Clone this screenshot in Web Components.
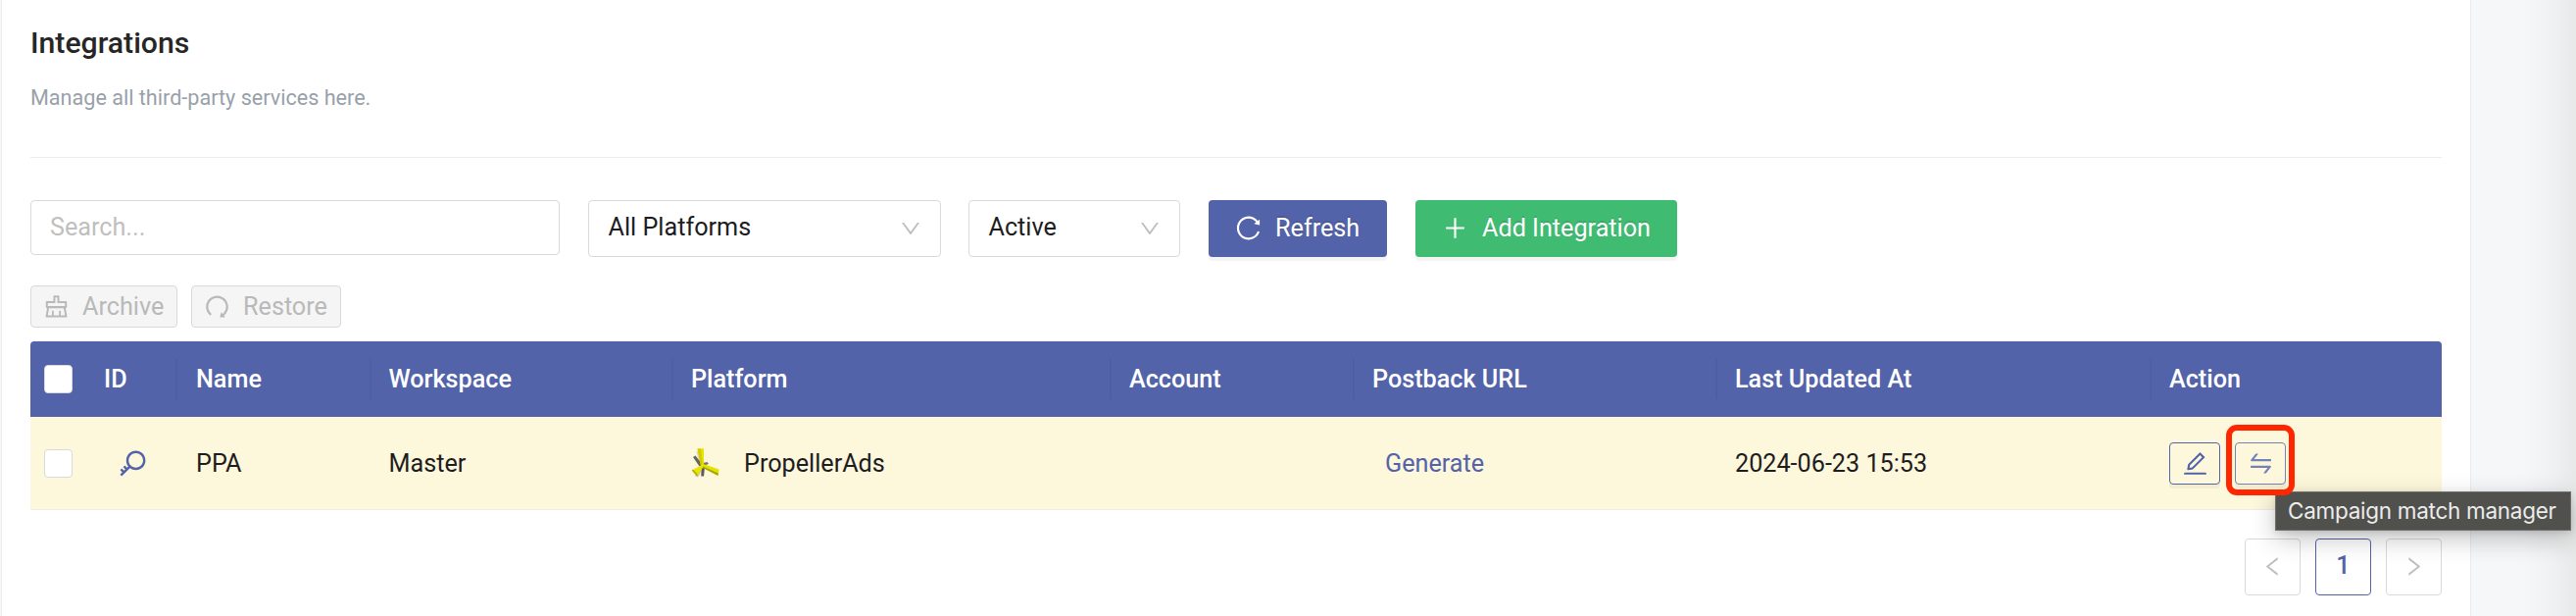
<!DOCTYPE html>
<html lang="en">
<head>
<meta charset="utf-8">
<title>Integrations</title>
<style>
html,body{margin:0;padding:0}
body{background:#f6f7f9;font-family:Roboto,"Liberation Sans",sans-serif;font-size:25.2px;color:#1d1d1f}
</style>
</head>
<body>
<integrations-page></integrations-page>
<script>
const define = (name, html, setup) => {
  const tpl = document.createElement('template');
  tpl.innerHTML = html;
  customElements.define(name, class extends HTMLElement {
    connectedCallback() {
      if (this.shadowRoot) return;
      const root = this.attachShadow({ mode: 'open' });
      root.appendChild(tpl.content.cloneNode(true));
      if (setup) setup(this, root);
    }
  });
};

const ICONS = {
  reload: 'M909.1 209.3l-56.4 44.1C775.8 155.1 656.2 92 521.9 92 290 92 102.3 279.5 102 511.5 101.7 743.7 289.8 932 521.9 932c181.3 0 335.8-115 394.6-276.1 1.5-4.2-.7-8.9-4.9-10.3l-56.7-19.5a8 8 0 00-10.1 4.8c-1.8 5-3.8 10-5.9 14.9-17.3 41-42.1 77.8-73.7 109.4A344.77 344.77 0 01655.9 829c-42.3 17.9-87.4 27-133.8 27-46.5 0-91.5-9.1-133.8-27A341.5 341.5 0 01279 755.2a342.16 342.16 0 01-73.7-109.4c-17.9-42.4-27-87.4-27-133.9s9.1-91.5 27-133.9c17.3-41 42.1-77.8 73.7-109.4 31.6-31.6 68.4-56.4 109.3-73.8 42.3-17.9 87.4-27 133.8-27 46.5 0 91.5 9.1 133.8 27a341.5 341.5 0 01109.3 73.8c9.9 9.9 19.2 20.4 27.8 31.4l-60.2 47a8 8 0 003 14.1l175.6 43c5 1.2 9.9-2.6 9.9-7.7l.8-180.9c-.1-6.6-7.8-10.3-13-6.2z',
  redo: 'M758.2 839.1C851.8 765.9 912 651.9 912 523.9 912 303 733.5 124.3 512.6 124 291.4 123.7 112 302.8 112 523.9c0 125.2 57.5 236.9 147.6 310.2 3.5 2.8 8.6 2.2 11.4-1.3l39.4-50.5c2.7-3.4 2.1-8.3-1.2-11.1-8.1-6.6-15.9-13.7-23.4-21.2a318.64 318.64 0 01-68.6-101.7C200.4 609 192 567.1 192 523.9s8.4-85.1 25.1-124.5c16.1-38.1 39.2-72.3 68.6-101.7 29.4-29.4 63.6-52.5 101.7-68.6C426.9 212.4 468.8 204 512 204s85.1 8.4 124.5 25.1c38.1 16.1 72.3 39.2 101.7 68.6 29.4 29.4 52.5 63.6 68.6 101.7 16.7 39.4 25.1 81.3 25.1 124.5s-8.4 85.1-25.1 124.5a318.64 318.64 0 01-68.6 101.7c-9.3 9.3-19.1 18-29.3 26L668.2 724a8 8 0 00-14.1 3l-39.6 162.2c-1.2 5 2.6 9.9 7.7 9.9l167 .8c6.7 0 10.5-7.7 6.3-12.9l-37.3-47.9z',
  clear: 'M899.1 869.6l-53-305.6H864c14.4 0 26-11.6 26-26V346c0-14.4-11.6-26-26-26H618V138c0-14.4-11.6-26-26-26H432c-14.4 0-26 11.6-26 26v182H160c-14.4 0-26 11.6-26 26v192c0 14.4 11.6 26 26 26h17.9l-53 305.6a25.95 25.95 0 0025.6 30.4h723c1.5 0 3-.1 4.4-.4a25.88 25.88 0 0021.2-30zM204 390h272V182h72v208h272v104H204V390zm468 440V674c0-4.4-3.6-8-8-8h-48c-4.4 0-8 3.6-8 8v156H416V674c0-4.4-3.6-8-8-8h-48c-4.4 0-8 3.6-8 8v156H202.8l45.1-260H776l45.1 260H672z',
  swap: 'M847.9 592H152c-4.4 0-8 3.6-8 8v60c0 4.4 3.6 8 8 8h605.2L612.9 851c-4.1 5.2-.4 13 6.3 13h72.5c4.9 0 9.5-2.2 12.6-6.1l168.8-214.1c16.5-21 1.6-51.8-25.2-51.8zM872 356H266.8l144.3-183c4.1-5.2.4-13-6.3-13h-72.5c-4.9 0-9.5 2.2-12.6 6.1L150.9 380.2c-16.5 21-1.6 51.8 25.1 51.8h696c4.4 0 8-3.6 8-8v-60c0-4.4-3.6-8-8-8z',
  edit: 'M257.7 752c2 0 4-.2 6-.5L431.9 722c2-.4 3.9-1.3 5.3-2.8l423.9-423.9a9.96 9.96 0 000-14.1L694.9 114.9c-1.9-1.9-4.4-2.9-7.1-2.9s-5.2 1-7.1 2.9L256.8 538.8c-1.5 1.5-2.4 3.3-2.8 5.3l-29.5 168.2a33.5 33.5 0 009.4 29.8c6.6 6.4 14.9 9.9 23.8 9.9zm67.4-174.4L687.8 215l73.3 73.3-362.7 362.6-88.9 15.7 15.6-89zM880 836H144c-17.7 0-32 14.3-32 32v36c0 4.4 3.6 8 8 8h784c4.4 0 8-3.6 8-8v-36c0-17.7-14.3-32-32-32z',
  down: 'M884 256h-75c-5.1 0-9.9 2.5-12.9 6.6L512 654.2 227.9 262.6c-3-4.1-7.8-6.6-12.9-6.6h-75c-6.5 0-10.3 7.4-6.5 12.7l352.6 486.1c12.8 17.6 39 17.6 51.7 0l352.6-486.1c3.9-5.3.1-12.7-6.4-12.7z',
  left: 'M724 218.3V141c0-6.7-7.7-10.4-12.9-6.3L260.3 486.8a31.86 31.86 0 000 50.3l450.8 352.1c5.3 4.1 12.9.4 12.9-6.3v-77.3c0-4.9-2.3-9.6-6.1-12.6l-360-281 360-281.1c3.8-3 6.1-7.7 6.1-12.6z',
  right: 'M300 218.3V141c0-6.7 7.7-10.4 12.9-6.3L763.7 486.8a31.86 31.86 0 010 50.3L312.9 889.2c-5.3 4.1-12.9.4-12.9-6.3v-77.3c0-4.9 2.3-9.6 6.1-12.6l360-281-360-281.1c-3.8-3-6.1-7.7-6.1-12.6z',
  plus: 'M474 152h76v322h290v76H550v322h-76V550H184v-76h290z',
  key: 'M608 112c-167.9 0-304 136.1-304 304 0 70.3 23.9 135 63.9 186.5l-41.1 41.1-62.3-62.3a8.15 8.15 0 00-11.4 0l-39.8 39.8a8.15 8.15 0 000 11.4l62.3 62.3-44.9 44.9-62.3-62.3a8.15 8.15 0 00-11.4 0l-39.8 39.8a8.15 8.15 0 000 11.4l62.3 62.3-65.3 65.3a8.03 8.03 0 000 11.3l42.3 42.3c3.1 3.1 8.2 3.1 11.3 0l253.6-253.6A304.06 304.06 0 00608 720c167.9 0 304-136.1 304-304S775.9 112 608 112zm161.2 465.2C726.2 620.3 668.9 644 608 644c-60.9 0-118.2-23.7-161.2-66.8-43.1-43-66.8-100.3-66.8-161.2 0-60.9 23.7-118.2 66.8-161.2 43-43.1 100.3-66.8 161.2-66.8 60.9 0 118.2 23.7 161.2 66.8 43.1 43 66.8 100.3 66.8 161.2 0 60.9-23.7 118.2-66.8 161.2z'
};

define('ui-icon', `<style>
:host{display:block;flex:none;width:var(--size,29px);height:var(--size,29px)}
svg{display:block;width:100%;height:100%;fill:currentColor}
</style><svg viewBox="0 0 1024 1024" aria-hidden="true"><path/></svg>`, (el, root) => {
  root.querySelector('path').setAttribute('d', ICONS[el.getAttribute('name')]);
});

define('propeller-logo', `<style>
:host{display:block;flex:none;width:29px;height:30px}
svg{display:block;overflow:visible}
</style><svg width="29" height="30" viewBox="0 0 29 30" aria-hidden="true">
<path d="M5 2.500 7.500 4 12 15 9 16z" fill="#d6d6cf"/>
<path d="M2 9 4.500 7.500 12 17 8.500 18.500z" fill="#66665f"/>
<path d="M12 15 16.500 14 18 16 12 18z" fill="#77776f"/>
<path d="M10.500 19H14L13 28.500H10.300z" fill="#5c5c58"/>
<path d="M4 28 9.500 19 10 24 7 29.500z" fill="#c4c4bc"/>
<path d="M6.500 .500 13 .300 13 17 10 18z" fill="#e8e400"/>
<path d="M6.500 .500 10 .400 11.800 17 10 18z" fill="#d0cc00"/>
<path d="M11 15.500 28.500 21.500 27.500 28 11 19z" fill="#e4e000"/>
<path d="M11 18 27.900 25.500 27.500 28 11 19.500z" fill="#aaa600"/>
<path d="M11 17 12.500 19 6 28.500 .800 22.500z" fill="#e8e400"/>
<path d="M.800 22.500 2 21.500 7 27 6 28.500z" fill="#b4b000"/>
</svg>`);

define('search-box', `<style>
:host{display:block;width:540px;height:56px}
input{display:block;box-sizing:border-box;width:100%;height:100%;margin:0;padding:0 19px 2px;border:1px solid #d9d9d9;border-radius:4px;background:#fff;font:inherit;color:inherit;outline:0}
input::placeholder{color:#bfbfbf;opacity:1}
</style><input type="text" placeholder="Search...">`);

define('ui-select', `<style>
:host{display:flex;box-sizing:border-box;align-items:center;justify-content:space-between;height:58px;padding:0 18px 3px 19.5px;border:1px solid #d9d9d9;border-radius:4px;background:#fff;white-space:nowrap}
ui-icon{--size:24px;color:#bfbfbf;margin-top:2px}
</style><slot></slot><ui-icon name="down"></ui-icon>`);

define('ui-button', `<style>
:host{display:flex;box-sizing:border-box;align-items:center;height:58px;gap:13px;border-radius:4px;color:#fff;white-space:nowrap;box-shadow:0 4px 0 rgba(0,0,0,.043);padding:0 0 1px 26px;text-shadow:0 -2px 0 rgba(0,0,0,.1)}
:host([kind=primary]){background:#5363a9}
:host([kind=success]){background:#3fbb72}
:host([kind=disabled]){height:43px;padding:0 0 1px 11px;gap:12px;border:1px solid #d9d9d9;background:#f5f5f5;color:#b9b9b9;box-shadow:none;text-shadow:none}
:host([kind=outline]){height:43px;width:52px;padding:0 0 1px;justify-content:center;border:1px solid #5363a9;background:transparent;color:#5363a9}
:host([hovered]){border-color:#7582ba;color:#7582ba}
</style><slot name="icon"></slot><slot></slot>`);

define('ui-checkbox', `<style>
:host{display:block;box-sizing:border-box;width:29px;height:29px;border:1px solid #d9d9d9;border-radius:4px;background:#fff}
</style>`);

define('red-frame', `<style>
:host{display:block;position:absolute;z-index:4;box-sizing:border-box;left:-9px;top:-18px;width:70px;height:72px;border:6px solid #ff2600;border-radius:11px}
</style>`);

define('ui-tooltip', `<style>
:host{display:flex;box-sizing:border-box;align-items:center;position:absolute;z-index:3;left:41px;top:50px;width:302px;height:40px;padding:0 0 1px 12px;background:#50514d;border:1px solid #6d6e6b;box-shadow:0 8px 26px rgba(0,0,0,.24),0 2px 6px rgba(0,0,0,.1);color:#ececec;font:400 22.5px Inter,sans-serif;letter-spacing:-.28px;white-space:nowrap}
</style><slot></slot>`);

define('data-table', `<style>
:host{display:block}
.row{display:grid;grid-template-columns:56px 94px 198px 308px 447px 248px 370px 443px 296px;align-items:center}
.head{height:77px;background:#5363a9;color:#fff;font-weight:500;border-radius:4px 4px 0 0}
.head>div{display:flex;box-sizing:border-box;align-items:center;height:41px;padding-left:18px;border-right:2px solid #4f5ea0}
.head>div:first-child,.head>div:last-child{border-right:0}
.body{height:95px;box-sizing:border-box;background:#fdf7dc;border-bottom:1px solid #ececec}
.body>div{display:flex;align-items:center;padding-left:18px}
.row>div:first-child{padding-left:14px}
.row>div:nth-child(2),.row>div:nth-child(3){padding-left:19px}
.row>div:nth-child(4){padding-left:17.5px}
.row.body>.id{padding-left:31.5px;color:#5363a9}
.id ui-icon{--size:33px}
.plat{gap:25px}
.body .link{padding-left:31px;color:#5363a9}
.actions{gap:15px;padding-top:1px}
.anchor{position:relative}
</style>
<div class="row head"><div><ui-checkbox></ui-checkbox></div><div>ID</div><div>Name</div><div>Workspace</div><div>Platform</div><div>Account</div><div>Postback URL</div><div>Last Updated At</div><div>Action</div></div>
<div class="row body"><div><ui-checkbox></ui-checkbox></div><div class="id"><ui-icon name="key"></ui-icon></div><div>PPA</div><div>Master</div><div class="plat"><propeller-logo></propeller-logo><span>PropellerAds</span></div><div></div><div class="link">Generate</div><div>2024-06-23 15:53</div><div class="actions"><ui-button kind="outline"><ui-icon slot="icon" name="edit"></ui-icon></ui-button><div class="anchor"><ui-button kind="outline" hovered><ui-icon slot="icon" name="swap"></ui-icon></ui-button><red-frame></red-frame><ui-tooltip>Campaign match manager</ui-tooltip></div></div></div>`);

define('ui-pagination', `<style>
:host{display:flex;justify-content:flex-end;gap:15px}
div{display:flex;box-sizing:border-box;align-items:center;justify-content:center;width:57px;height:58px;padding-bottom:3px;border:1px solid #d9d9d9;border-radius:4px;color:#bfbfbf}
.on{border-color:#5363a9;color:#5363a9;font-weight:500}
ui-icon{--size:25px;margin-top:2px}
</style><div><ui-icon name="left"></ui-icon></div><div class="on">1</div><div><ui-icon name="right"></ui-icon></div>`);

define('integrations-page', `<style>
:host{display:flex;width:2628px;height:628px;overflow:hidden;background:linear-gradient(90deg,#f6f7f9 2572px,#f0f1f2 2604px,#e7e8e8 2628px)}
main{box-sizing:border-box;width:2520px;margin-left:1px;height:628px;padding:0 29px;border-left:1px solid #ebedf0;border-right:1px solid #ebebed;background:#fff}
h1{margin:0;padding-top:24px;font-size:30.2px;line-height:40px;font-weight:500;color:#262626}
p{margin:0;padding:19px 0 44px;font-size:21.6px;line-height:33px;color:#98a1aa;border-bottom:1px solid #ededee}
.filters{display:flex;height:58px;margin-top:43px}
.bulk{display:flex;gap:14px;margin:29px 0 14px}
ui-pagination{margin-top:29px}
</style>
<main>
<h1>Integrations</h1>
<p>Manage all third-party services here.</p>
<div class="filters">
<search-box></search-box>
<ui-select style="width:360px;margin-left:29px">All Platforms</ui-select>
<ui-select style="width:216px;margin-left:28px">Active</ui-select>
<ui-button kind="primary" style="width:182px;margin-left:29px"><ui-icon slot="icon" name="reload"></ui-icon>Refresh</ui-button>
<ui-button kind="success" style="width:267px;margin-left:29px"><ui-icon slot="icon" name="plus"></ui-icon>Add Integration</ui-button>
</div>
<div class="bulk">
<ui-button kind="disabled" style="width:150px"><ui-icon slot="icon" name="clear"></ui-icon>Archive</ui-button>
<ui-button kind="disabled" style="width:153px"><ui-icon slot="icon" name="redo"></ui-icon>Restore</ui-button>
</div>
<data-table></data-table>
<ui-pagination></ui-pagination>
</main>`);
</script>
</body>
</html>
